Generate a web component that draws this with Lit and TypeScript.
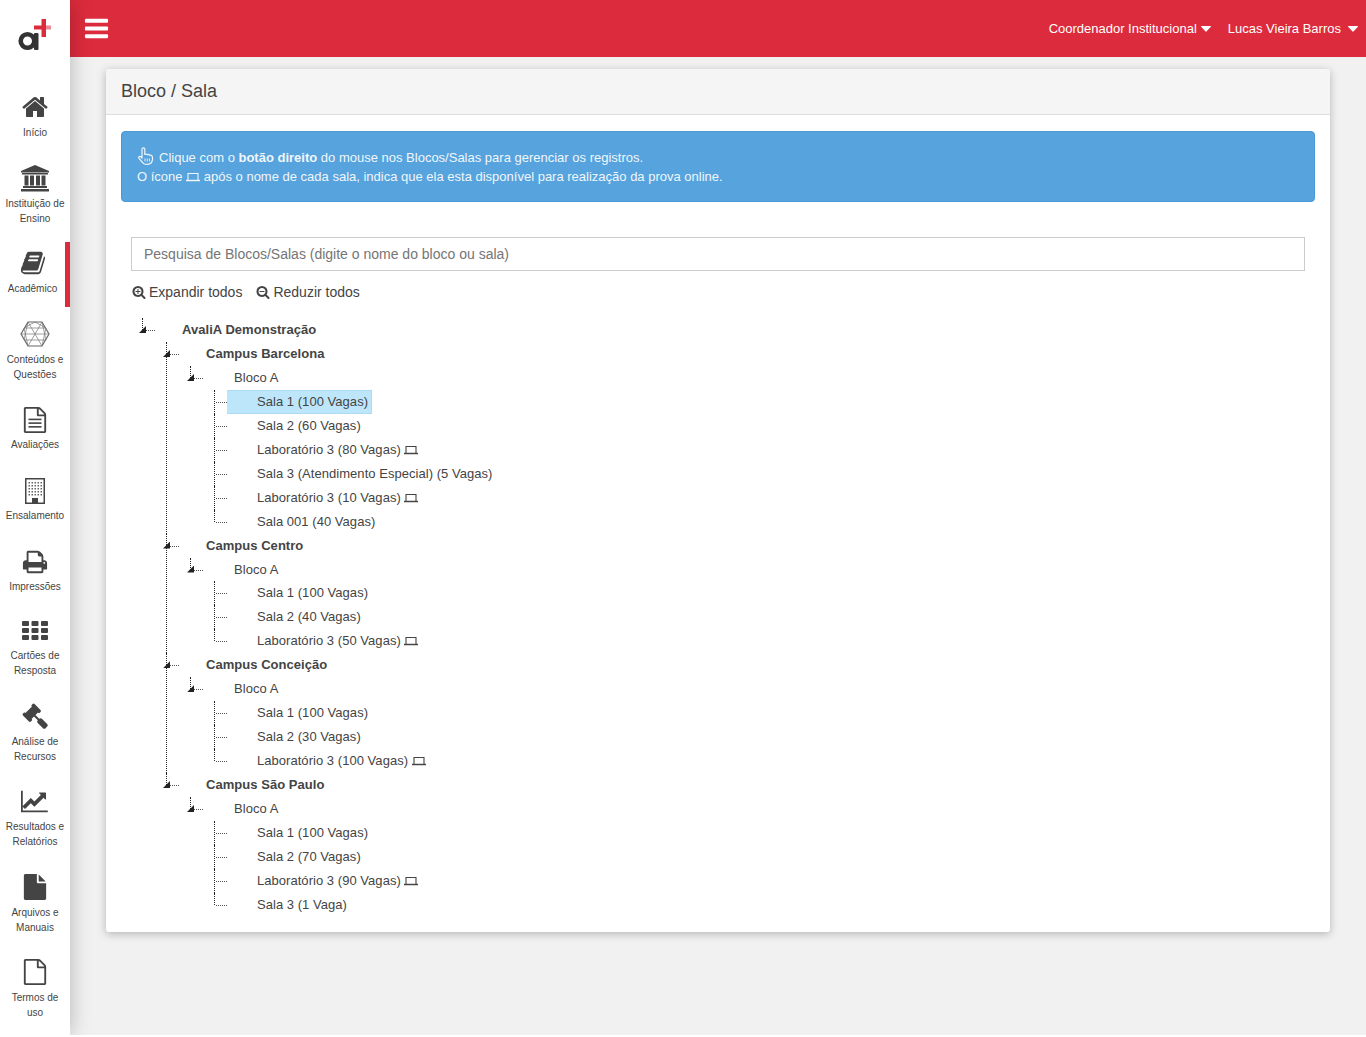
import {LitElement, html, css, svg} from 'lit'
import {customElement} from 'lit/decorators.js'

type TreeNode = {label: string, laptop?: boolean, selected?: boolean, children?: TreeNode[]}

const sala = (label: string, laptop = false, selected = false): TreeNode => ({label, laptop, selected})
const bloco = (children: TreeNode[]): TreeNode => ({label: 'Bloco A', children})

const TREE: TreeNode = {
  label: 'AvaliA Demonstração',
  children: [
    {label: 'Campus Barcelona', children: [bloco([
      sala('Sala 1 (100 Vagas)', false, true),
      sala('Sala 2 (60 Vagas)'),
      sala('Laboratório 3 (80 Vagas)', true),
      sala('Sala 3 (Atendimento Especial) (5 Vagas)'),
      sala('Laboratório 3 (10 Vagas)', true),
      sala('Sala 001 (40 Vagas)'),
    ])]},
    {label: 'Campus Centro', children: [bloco([
      sala('Sala 1 (100 Vagas)'),
      sala('Sala 2 (40 Vagas)'),
      sala('Laboratório 3 (50 Vagas)', true),
    ])]},
    {label: 'Campus Conceição', children: [bloco([
      sala('Sala 1 (100 Vagas)'),
      sala('Sala 2 (30 Vagas)'),
      sala('Laboratório 3 (100 Vagas)', true),
    ])]},
    {label: 'Campus São Paulo', children: [bloco([
      sala('Sala 1 (100 Vagas)'),
      sala('Sala 2 (70 Vagas)'),
      sala('Laboratório 3 (90 Vagas)', true),
      sala('Sala 3 (1 Vaga)'),
    ])]},
  ],
}

const FILE_O = 'M1596 380q28 28 48 76t20 88v1152q0 40-28 68t-68 28h-1344q-40 0-68-28t-28-68v-1600q0-40 28-68t68-28h896q40 0 88 20t76 48zm-444-244v376h376q-10-29-22-41l-313-313q-12-12-41-22zm384 1528v-1024h-416q-40 0-68-28t-28-68v-416h-768v1536h1280z'
const LENS = 'm128 32q0-185-131.5-316.5t-316.5-131.5-316.5 131.5-131.5 316.5 131.5 316.5 316.5 131.5 316.5-131.5 131.5-316.5zm512 832q0 53-37.5 90.5t-90.5 37.5q-54 0-90-38l-343-342q-179 124-399 124-143 0-273.5-55.5t-225-150-150-225-55.5-273.5 55.5-273.5 150-225 225-150 273.5-55.5 273.5 55.5 225 150 150 225 55.5 273.5q0 220-124 399l343 343q37 37 37 90z'

const icon = (d: string, size: number, w = 1792) => html`
  <svg width=${size * w / 1792} height=${size} viewBox="0 0 ${w} 1792" fill="currentColor"><path d=${d}></path></svg>
`

const ICONS = {
  home: icon('M1472 992v480q0 26-19 45t-45 19h-384v-384h-256v384h-384q-26 0-45-19t-19-45v-480q0-1 .5-3t.5-3l575-474 575 474q1 2 1 6zm223-69l-62 74q-8 9-21 11h-3q-13 0-21-7l-692-577-692 577q-12 8-24 7-13-2-21-11l-62-74q-8-10-7-23.5t11-21.5l719-599q32-26 76-26t76 26l244 204v-195q0-14 9-23t23-9h192q14 0 23 9t9 23v408l219 182q10 8 11 21.5t-7 23.5z', 28),
  bank: html`<svg width="30" height="27" viewBox="0 0 30 27" fill="currentColor">
    <path d="M15 0 29 6v1.500H1V6z"></path>
    <rect x="2" y="8" width="26" height="1.500"></rect>
    <rect x="4.500" y="10.500" width="4" height="10"></rect>
    <rect x="10" y="10.500" width="4" height="10"></rect>
    <rect x="16" y="10.500" width="4" height="10"></rect>
    <rect x="21.500" y="10.500" width="4" height="10"></rect>
    <rect x="3" y="21" width="24" height="2"></rect>
    <rect x="1" y="24" width="28" height="2.500"></rect>
  </svg>`,
  book: icon('M1703 478q40 57 18 129l-275 906q-19 64-76.500 107.500t-122.500 43.500h-923q-77 0-148.500-53.500t-99.500-131.500q-24-67-2-127 0-4 3-27t4-37q1-8-3-21.500t-3-19.500q2-11 8-21t16.500-23.500 16.500-23.500q23-38 45-91.500t30-91.500q3-10 .5-30t-.5-28q3-11 17-28t17-23q21-36 42-92t25-90q1-9-2.500-32t.5-28q4-13 22-30.500t22-22.500q19-26 42.500-84.500t27.500-96.500q1-8-3-25.500t-2-26.500q2-8 9-18t18-23 17-21q8-12 16.500-30.500t15-35 16-36 19.500-32 26.500-23.500 36-11.500 47.500 5.500l-1 3q38-9 51-9h761q74 0 114 56t18 130l-274 906q-36 119-71.500 153.500t-128.500 34.500h-869q-27 0-38 15-11 16-1 43 24 70 144 70h923q29 0 56-15.500t35-41.500l300-987q7-22 5-57 38 15 59 43zm-1064 2q-4 13 2 22.500t20 9.500h608q13 0 25.500-9.500t16.500-22.500l21-64q4-13-2-22.500t-20-9.500h-608q-13 0-25.500 9.500t-16.500 22.500zm-83 256q-4 13 2 22.500t20 9.500h608q13 0 25.500-9.500t16.500-22.500l21-64q4-13-2-22.500t-20-9.500h-608q-13 0-25.500 9.500t-16.500 22.500z', 26),
  hex: html`<svg width="30" height="26" viewBox="0 0 30 26" fill="none" stroke="#777" stroke-width=".7">
    <path d="M8 1h14l7 12-7 12H8L1 13z" stroke-width="1.200" stroke="#666"></path>
    <path d="M8 1l14 24M22 1L8 25M1 13h28M4 7h22M4 19h22M8 1 4 19M22 1l4 18M8 25 4 7M22 25l4-18M15 1 4 7M15 1l11 6"></path>
  </svg>`,
  fileText: html`<svg width="26" height="26" viewBox="0 0 1792 1792" fill="currentColor">
    <path d=${FILE_O}></path>
    <rect x="448" y="800" width="896" height="110"></rect>
    <rect x="448" y="1056" width="896" height="110"></rect>
    <rect x="448" y="1312" width="896" height="110"></rect>
  </svg>`,
  building: html`<svg width="20" height="26" viewBox="0 0 20 26">
    <rect x=".750" y=".750" width="18.500" height="24.500" fill="#fff" stroke="currentColor" stroke-width="1.500"></rect>
    ${[4, 7, 10, 13, 16].map(y => [4, 7, 10, 13, 16].map(x => svg`<rect x=${x - .5} y=${y} width="1.500" height="1.500" fill="#666"></rect>`))}
    <rect x="7" y="20" width="6" height="5" fill="currentColor"></rect>
  </svg>`,
  print: icon('M448 1536h896v-256h-896v256zm0-640h896v-384h-160q-40 0-68-28t-28-68v-160h-640v640zm1152 64q0-26-19-45t-45-19-45 19-19 45 19 45 45 19 45-19 19-45zm128 0v416q0 13-9.500 22.500t-22.500 9.500h-224v160q0 40-28 68t-68 28h-960q-40 0-68-28t-28-68v-160h-224q-13 0-22.500-9.500t-9.500-22.500v-416q0-79 56.500-135.500t135.500-56.500h64v-544q0-40 28-68t68-28h672q40 0 88 20t76 48l152 152q28 28 48 76t20 88v256h64q79 0 135.500 56.500t56.500 135.500z', 26),
  th: html`<svg width="26" height="19" viewBox="0 0 26 19" fill="currentColor">
    ${[0, 7, 14].map(y => [0, 9.500, 19].map(x => svg`<rect x=${x} y=${y} width="7" height="5" rx="1"></rect>`))}
  </svg>`,
  gavel: icon('M1771 1536q0 53-37 90l-107 108q-39 37-91 37-53 0-90-37l-363-364q-38-36-38-90 0-53 43-96l-256-256-126 126q-14 14-34 14t-34-14q2 2 12.500 12t12.500 13 10 11.500 10 13.500 6 13.500 5.500 16.500 1.500 18q0 38-28 68-3 3-16.500 18t-19 20.500-18.500 16.500-22 15.500-22 9-26 4.500q-40 0-68-28l-408-408q-28-28-28-68 0-13 4.500-26t9-22 15.500-22 16.500-18.500 20.500-19 18-16.500q30-28 68-28 10 0 18 1.500t16.500 5.500 13.500 6 13.500 10 11.500 10 13 12.500 12 12.500q-14-14-14-34t14-34l348-348q14-14 34-14t34 14q-2-2-12.500-12t-12.500-13-10-11.500-10-13.500-6-13.500-5.500-16.500-1.500-18q0-38 28-68 3-3 16.500-18t19-20.500 18.500-16.500 22-15.500 22-9 26-4.500q40 0 68 28l408 408q28 28 28 68 0 13-4.500 26t-9 22-15.500 22-16.500 18.500-20.500 19-18 16.500q-30 28-68 28-10 0-18-1.500t-16.500-5.500-13.500-6-13.500-10-11.500-10-13-12.500-12-12.500q14 14 14 34t-14 34l-126 126 256 256q43-43 96-43 52 0 91 37l363 363q37 39 37 91z', 26),
  chart: icon('M1920 1536v128h-1920v-1536h128v1408h1792zm-128-1248v435q0 21-19.500 29.500t-35.500-7.500l-121-121-633 633q-10 10-23 10t-23-10l-233-233-416 416-192-192 585-585q10-10 23-10t23 10l233 233 464-464-121-121q-16-16-7.500-35.500t29.500-19.500h435q14 0 23 9t9 23z', 25, 2048),
  file: html`<svg width="26" height="26" viewBox="0 0 1792 1792" fill="currentColor">
    <path d="M1152 512v-472q22 14 36 28l408 408q14 14 28 36h-472zm-128 32q0 40 28 68t68 28h544v1056q0 40-28 68t-68 28h-1344q-40 0-68-28t-28-68v-1600q0-40 28-68t68-28h800v544z"></path>
  </svg>`,
  fileO: html`<svg width="26" height="26" viewBox="0 0 1792 1792" fill="currentColor"><path d=${FILE_O}></path></svg>`,
}

const MENU = [
  {icon: ICONS.home, lines: ['Início']},
  {icon: ICONS.bank, lines: ['Instituição de', 'Ensino']},
  {icon: ICONS.book, lines: ['Acadêmico'], active: true},
  {icon: ICONS.hex, lines: ['Conteúdos e', 'Questões']},
  {icon: ICONS.fileText, lines: ['Avaliações']},
  {icon: ICONS.building, lines: ['Ensalamento']},
  {icon: ICONS.print, lines: ['Impressões']},
  {icon: ICONS.th, lines: ['Cartões de', 'Resposta'], tight: true},
  {icon: ICONS.gavel, lines: ['Análise de', 'Recursos']},
  {icon: ICONS.chart, lines: ['Resultados e', 'Relatórios']},
  {icon: ICONS.file, lines: ['Arquivos e', 'Manuais']},
  {icon: ICONS.fileO, lines: ['Termos de', 'uso']},
]

const laptop = html`<svg class="laptop" width="14" height="10" viewBox="0 0 14 10" fill="none" stroke="currentColor" stroke-width="1.100">
  <path d="M2 8V1.500h10V8"></path><path d="M0 8.500h14" stroke-width="1.500"></path>
</svg>`

const caret = html`<svg width="10" height="6" viewBox="0 0 10 6" fill="currentColor"><path d="M.5 0h9a.5.5 0 0 1 .4.8L5.400 5.600a.5.5 0 0 1-.8 0L.1.800A.5.5 0 0 1 .5 0z"></path></svg>`

const hand = html`<svg class="hand" width="18" height="19" viewBox="0 0 18 19" fill="none" stroke="currentColor" stroke-width="1.200" stroke-linejoin="round">
  <path d="M5 11V2.300a1.400 1.400 0 0 1 2.800 0V7.500c1-.6 2-.5 2.500.3.900-.5 1.900-.2 2.300.5 1-.4 2.200.1 2.600 1 .5 1.300.5 3.300-.2 5.200-.4 1.200-1.200 2-2.400 2.400-2 .6-4 .5-5.600-.2-1.500-.7-2.700-2.800-5-5.300-1-1.200.5-2.500 1.600-1.800z"></path>
  <path d="M8 11.500v3M10.300 11.500v3M12.600 11.500v3" stroke-width=".9"></path>
</svg>`

@customElement('app-root')
export class AppRoot extends LitElement {

  static styles = css`
    :host {
      display: flex;
      height: 1035px;
      background: #f1f1f1;
      font-family: "Liberation Sans", Arial, sans-serif;
      font-size: 13px;
      color: #444;
    }
    .sidebar {
      height: 100%;
      overflow: hidden;
      background: #fff;
    }
    .sidebar-shadow {
      position: relative;
      z-index: 2;
      flex: 0 0 70px;
      box-shadow: 0 0 20px rgba(0,0,0,.25);
    }
    .logo {
      height: 85.6px;
    }
    .logo svg {
      display: block;
    }
    .item {
      box-sizing: border-box;
      height: 65px;
      padding-top: 5px;
      margin-bottom: 6px;
      text-align: center;
      color: #444;
      font-size: 10px;
      line-height: 15px;
    }
    .item.two {
      height: 79.4px;
    }
    .item.active {
      border-right: 5px solid #dc2b3c;
    }
    .item.tight {
      margin-top: -2px;
    }
    .item-icon {
      display: flex;
      align-items: center;
      justify-content: center;
      height: 33px;
      margin-bottom: 1px;
    }
    .item-icon svg {
      display: block;
    }
    .main {
      flex: 1;
      min-width: 0;
    }
    .topbar {
      display: flex;
      align-items: center;
      height: 57px;
      padding: 0 8px 0 13px;
      background: #dc2b3c;
      color: #fff;
    }
    .topbar svg {
      display: block;
    }
    .menu-btn {
      flex: 1;
    }
    .topbar-link {
      display: flex;
      align-items: center;
      gap: 4px;
      margin-left: 17px;
    }
    .topbar-link.user {
      gap: 7px;
    }
    .card {
      margin: 12px 36px 0;
      background: #fff;
      border-radius: 3px;
      box-shadow: 0 2px 8px rgba(0,0,0,.25);
    }
    .card-head {
      box-sizing: border-box;
      height: 46px;
      padding: 0 15px;
      background: #f5f5f5;
      border-bottom: 1px solid #ddd;
      border-radius: 3px 3px 0 0;
      font-size: 18px;
      line-height: 44px;
    }
    .card-body {
      padding: 16px 15px 15px;
    }
    .alert {
      box-sizing: border-box;
      height: 71px;
      padding: 15px;
      background: #56a3dd;
      border: 1px solid #4a98d4;
      border-radius: 4px;
      color: #f0f6fb;
      line-height: 19px;
    }
    .alert .first {
      display: flex;
      align-items: flex-end;
      gap: 4px;
      height: 20px;
    }
    .hand {
      display: block;
      flex: none;
      margin-bottom: 1px;
    }
    .laptop {
      vertical-align: -1px;
    }
    .search {
      display: block;
      box-sizing: border-box;
      width: calc(100% - 20px);
      height: 34px;
      margin: 35px 10px 0;
      padding: 0 12px;
      border: 1px solid #ccc;
      background: #fff;
      font: 14px "Liberation Sans", Arial, sans-serif;
      color: #999;
      line-height: 32px;
    }
    .tools {
      display: flex;
      gap: 14px;
      margin: 11px 0 0 11px;
      font-size: 14px;
      line-height: 20px;
    }
    .tools span {
      display: flex;
      align-items: center;
      gap: 3px;
    }
    .tree {
      margin: 16px 0 0 21px;
      letter-spacing: .04px;
    }
    ul {
      list-style: none;
      margin: 0;
      padding: 0;
    }
    li {
      position: relative;
    }
    li::before {
      content: '';
      position: absolute;
      left: 0;
      top: 0;
      bottom: 0;
      border-left: 1px dotted #222;
    }
    li:last-child::before {
      bottom: auto;
      height: 12px;
    }
    li > ul {
      margin-left: 24px;
    }
    .row {
      position: relative;
      box-sizing: border-box;
      height: 23.96px;
      line-height: 24px;
      white-space: nowrap;
    }
    .row::before {
      content: '';
      position: absolute;
      left: 2px;
      top: 12px;
      width: 11px;
      border-top: 1px dotted #555;
    }
    .row.branch::before {
      left: 4px;
      width: 9px;
    }
    .row.branch::after {
      content: '';
      position: absolute;
      left: -3px;
      top: 8px;
      width: 7px;
      height: 7px;
      background: #222;
      clip-path: polygon(100% 0, 100% 100%, 0 100%);
    }
    .level-0, .level-1 {
      font-weight: bold;
      padding-left: 40px;
    }
    .level-2 {
      padding-left: 44px;
    }
    .level-3 {
      padding-left: 13px;
    }
    .node {
      display: inline-block;
      box-sizing: border-box;
      height: 24px;
      padding: 0 3px 0 30px;
      border: 1px solid transparent;
      border-left: 0;
      line-height: 22px;
    }
    .node.selected {
      background: #bde6fb;
      border-color: #aadcf6;
    }
  `

  renderNode(node: TreeNode, level: number) {
    const branch = !!node.children
    return html`
      <li>
        <div class="row level-${level} ${branch ? 'branch' : ''}">
          ${level === 3
            ? html`<span class="node ${node.selected ? 'selected' : ''}">${node.label}${node.laptop ? html` ${laptop}` : ''}</span>`
            : node.label}
        </div>
        ${branch ? html`<ul>${node.children!.map(c => this.renderNode(c, level + 1))}</ul>` : ''}
      </li>
    `
  }

  render() {
    return html`
      <div class="sidebar-shadow">
        <aside class="sidebar">
          <div class="logo">
            <svg width="70" height="60" viewBox="0 0 70 60">
              <circle cx="27.500" cy="41" r="6.800" fill="none" stroke="#333" stroke-width="4.600"></circle>
              <rect x="34" y="33" width="4.500" height="17" rx="1" fill="#333"></rect>
              <rect x="41.500" y="19" width="4.500" height="18" fill="#dc2b3c"></rect>
              <rect x="34" y="25.500" width="12" height="4" fill="#dc2b3c"></rect>
              <rect x="46" y="25.500" width="5" height="4" fill="#ec8a94"></rect>
            </svg>
          </div>
          ${MENU.map(m => html`
            <div class="item ${m.lines.length > 1 ? 'two' : ''} ${m.active ? 'active' : ''} ${m.tight ? 'tight' : ''}">
              <div class="item-icon">${m.icon}</div>
              ${m.lines.map(l => html`<div>${l}</div>`)}
            </div>
          `)}
        </aside>
      </div>
      <div class="main">
        <header class="topbar">
          <div class="menu-btn">${icon('M1664 1344v128q0 26-19 45t-45 19h-1408q-26 0-45-19t-19-45v-128q0-26 19-45t45-19h1408q26 0 45 19t19 45zm0-512v128q0 26-19 45t-45 19h-1408q-26 0-45-19t-19-45v-128q0-26 19-45t45-19h1408q26 0 45 19t19 45zm0-512v128q0 26-19 45t-45 19h-1408q-26 0-45-19t-19-45v-128q0-26 19-45t45-19h1408q26 0 45 19t19 45z', 27)}</div>
          <div class="topbar-link">Coordenador Institucional ${caret}</div>
          <div class="topbar-link user">Lucas Vieira Barros ${caret}</div>
        </header>
        <section class="card">
          <div class="card-head">Bloco / Sala</div>
          <div class="card-body">
            <div class="alert">
              <div class="first">${hand}<span>Clique com o <b>botão direito</b> do mouse nos Blocos/Salas para gerenciar os registros.</span></div>
              <div>O ícone ${laptop} após o nome de cada sala, indica que ela esta disponível para realização da prova online.</div>
            </div>
            <input class="search" placeholder="Pesquisa de Blocos/Salas (digite o nome do bloco ou sala)">
            <div class="tools">
              <span>${icon('M1088 800v64q0 13-9.500 22.500t-22.500 9.500h-224v224q0 13-9.500 22.500t-22.500 9.500h-64q-13 0-22.500-9.500t-9.500-22.500v-224h-224q-13 0-22.500-9.500t-9.500-22.500v-64q0-13 9.500-22.500t22.500-9.500h224v-224q0-13 9.500-22.500t22.500-9.500h64q13 0 22.500 9.500t9.500 22.500v224h224q13 0 22.500 9.500t9.500 22.500z' + LENS, 14)}Expandir todos</span>
              <span>${icon('M1088 800v64q0 13-9.500 22.500t-22.500 9.500h-576q-13 0-22.500-9.500t-9.500-22.500v-64q0-13 9.500-22.500t22.500-9.500h576q13 0 22.500 9.500t9.500 22.500z' + LENS, 14)}Reduzir todos</span>
            </div>
            <ul class="tree">${this.renderNode(TREE, 0)}</ul>
          </div>
        </section>
      </div>
    `
  }
}

declare global {
  interface HTMLElementTagNameMap {
    'app-root': AppRoot
  }
}
